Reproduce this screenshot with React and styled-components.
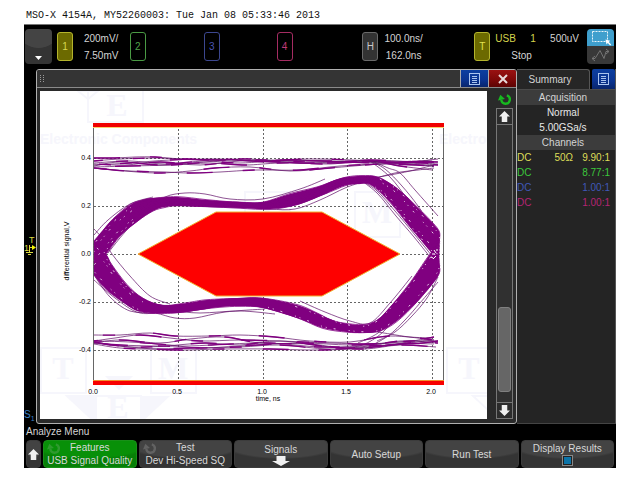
import React from 'react';
import styled, { createGlobalStyle } from 'styled-components';

const GlobalStyle = createGlobalStyle`
	* {
		box-sizing: border-box;
	}
	body {
		margin: 0;
		background: #fff;
		font-family: 'Liberation Sans', Arial, sans-serif;
		font-size: 10px;
		line-height: 12px;
	}
	button {
		font: inherit;
		color: inherit;
		padding: 0;
		margin: 0;
		border: 0;
		cursor: pointer;
	}
`;

const channels = [
	{ id: 1, color: '#d8d850', border: '#b4b42c', fill: '#6c6a00', scale: '200mV/', offset: '7.50mV' },
	{ id: 2, color: '#4fa24a', border: '#4a9a44' },
	{ id: 3, color: '#4a55b4', border: '#3c478f' },
	{ id: 4, color: '#c23a78', border: '#a52c62' },
];

const probes = [
	{ coupling: 'DC', impedance: '50Ω', ratio: '9.90:1', color: '#dede58' },
	{ coupling: 'DC', impedance: '', ratio: '8.77:1', color: '#3cc83c' },
	{ coupling: 'DC', impedance: '', ratio: '1.00:1', color: '#4058b8' },
	{ coupling: 'DC', impedance: '', ratio: '1.00:1', color: '#b42474' },
];

/* ---------- eye diagram data ---------- */

// outer and inner edges of the two dense bundles
const upperTop = [[94, 241], [103, 230], [113, 219], [130, 205], [142, 200], [153, 198], [177, 197], [207, 200], [240, 202], [263, 202], [290, 194], [317, 187], [335, 180], [347, 177], [362, 176], [378, 177], [397, 188], [417, 207], [437, 228], [440, 236]];
const upperBottom = [[94, 268], [106, 254], [120, 236], [137, 222], [153, 211], [165, 207], [177, 206], [207, 207], [240, 208], [270, 209], [297, 205], [323, 195], [336, 189], [347, 185], [358, 184], [371, 185], [390, 202], [410, 227], [430, 251], [439, 262]];
const lowerTop = [[94, 241], [106, 254], [112, 265], [127, 285], [143, 298], [163, 305], [187, 303], [207, 300], [240, 298], [263, 298], [297, 305], [317, 313], [330, 319], [343, 323], [363, 325], [377, 320], [390, 307], [410, 283], [428, 257], [438, 244]];
const lowerBottom = [[94, 275], [103, 286], [113, 295], [133, 309], [143, 312], [153, 313], [177, 313], [200, 310], [220, 307], [240, 306], [263, 308], [297, 318], [323, 328], [347, 332], [363, 333], [380, 331], [397, 321], [417, 302], [437, 278], [440, 268]];

const outliers = [
	[[94, 229], [102, 238], [112, 254], [130, 276], [150, 296], [170, 304]],
	[[108, 253], [125, 232], [145, 211], [165, 197], [185, 193], [205, 194], [230, 199], [263, 199], [300, 189], [325, 179]],
	[[94, 235], [108, 220], [130, 204], [153, 197]],
	[[94, 275], [110, 297], [130, 311], [155, 313], [175, 318], [195, 318], [225, 312], [265, 309]],
	[[94, 280], [115, 298], [140, 313], [170, 311], [200, 313], [240, 311], [275, 314]],
	[[240, 206], [270, 209], [295, 209], [320, 200], [345, 188], [362, 182]],
	[[368, 160], [385, 169], [402, 186], [418, 206], [432, 228]],
	[[372, 161], [388, 168], [400, 173], [415, 190], [438, 216]],
	[[370, 161], [390, 177], [408, 200], [424, 222], [436, 240]],
	[[372, 178], [390, 175], [410, 171], [434, 165]],
	[[370, 180], [395, 173], [418, 170], [434, 168]],
	[[347, 348], [365, 344], [385, 330], [405, 303], [422, 280], [438, 256]],
	[[358, 343], [378, 333], [392, 318], [408, 292], [428, 262]],
	[[377, 341], [395, 332], [412, 316], [427, 298], [438, 277]],
	[[365, 349], [388, 336], [405, 320], [420, 303], [438, 282]],
	[[300, 301], [325, 312], [350, 321], [370, 323], [390, 303], [412, 276]],
	[[372, 331], [390, 334], [410, 337], [433, 338]],
	[[360, 180], [376, 190], [395, 211], [415, 235], [432, 256]],
	[[362, 181], [378, 194], [396, 216], [414, 237], [434, 262]],
];

const highRail = [
	[[94, 158], [115, 158], [135, 157], [155, 157], [180, 159], [220, 160], [270, 160], [330, 161], [380, 161], [438, 162]],
	[[94, 161], [120, 159], [160, 158], [210, 160], [250, 159], [300, 163], [360, 161], [400, 163], [438, 159]],
	[[94, 163], [130, 161], [165, 164], [205, 161], [240, 163], [290, 160], [340, 162], [390, 162], [438, 165]],
	[[94, 164], [125, 165], [160, 162], [200, 165], [240, 161], [280, 162], [330, 164], [370, 160], [438, 164]],
	[[94, 166], [120, 162], [160, 165], [195, 163], [230, 160], [270, 162], [320, 161], [380, 163], [432, 160]],
	[[94, 167], [130, 166], [170, 165], [210, 163], [245, 165], [280, 163], [330, 163], [380, 162], [434, 166]],
	[[94, 168], [125, 171], [158, 173], [190, 171], [215, 168], [250, 167], [290, 171], [330, 168], [380, 164], [434, 162]],
	[[94, 168], [130, 171], [165, 172], [190, 173], [220, 172], [255, 170], [300, 170], [340, 166], [385, 164], [434, 166]],
	[[94, 165], [130, 163], [170, 160], [220, 159], [260, 161], [310, 159], [370, 161], [400, 166], [432, 170]],
];

const lowRail = [
	[[94, 335], [120, 335], [150, 333], [175, 336], [210, 336], [240, 335], [275, 337], [310, 341], [350, 342], [390, 336], [434, 340]],
	[[94, 341], [115, 338], [140, 335], [170, 338], [200, 341], [240, 340], [280, 341], [330, 343], [375, 344], [410, 341], [438, 341]],
	[[94, 343], [120, 340], [160, 343], [190, 339], [225, 337], [260, 343], [310, 344], [350, 348], [400, 341], [438, 343]],
	[[94, 343], [120, 345], [155, 346], [190, 346], [230, 344], [270, 343], [320, 347], [360, 346], [410, 344], [438, 341]],
	[[94, 342], [130, 347], [165, 346], [205, 343], [240, 345], [280, 341], [330, 347], [365, 349], [400, 345], [436, 347]],
	[[94, 344], [120, 348], [150, 349], [190, 348], [240, 347], [280, 345], [330, 349], [380, 346], [434, 340]],
	[[94, 343], [140, 348], [180, 350], [220, 349], [270, 349], [310, 350], [350, 349], [390, 345], [434, 337]],
	[[94, 341], [130, 342], [170, 345], [200, 348], [240, 346], [300, 343], [350, 345], [390, 343], [434, 344]],
];

const smooth = (points, start = 'M') => {
	let d = `${start}${points[0].join(' ')}`;
	for (let i = 0; i < points.length - 1; i++) {
		const p0 = points[i - 1] || points[i];
		const p1 = points[i];
		const p2 = points[i + 1];
		const p3 = points[i + 2] || p2;
		d += `C${p1[0] + (p2[0] - p0[0]) / 6} ${p1[1] + (p2[1] - p0[1]) / 6} `;
		d += `${p2[0] - (p3[0] - p1[0]) / 6} ${p2[1] - (p3[1] - p1[1]) / 6} ${p2[0]} ${p2[1]}`;
	}
	return d;
};

const band = (top, bottom) => `${smooth(top)}${smooth([...bottom].reverse(), 'L')}Z`;

// one trace between the two edges, k = 0 on top and 1 at the bottom
const between = (top, bottom, k) =>
	top.map((p, i) => [
		p[0] + (bottom[i][0] - p[0]) * k,
		p[1] + (bottom[i][1] - p[1]) * k + Math.sin(i * 1.7 + k * 31) * 0.5,
	]);

const steps = [0, 0.1, 0.2, 0.3, 0.4, 0.5, 0.6, 0.7, 0.8, 0.9, 1];
const xTicks = [[94, '0.0'], [178, '0.5'], [263, '1.0'], [347, '1.5'], [432, '2.0']];
const yTicks = [[158, '0.4'], [206, '0.2'], [254, '0.0'], [302, '-0.2'], [350, '-0.4']];

const Logo = ({ x, y, whole }) => (
	<g transform={`translate(${x} ${y})`}>
		<path d="M0 0h45v45h-45zM55 48h45v45h-45zM26 48h28v26z" fill="none" stroke="#f6f6fc" strokeWidth="2" />
		<LogoText x="22" y="31">T</LogoText>
		{whole && (
			<>
				<path d="M110 0h45v45h-45z" fill="none" stroke="#f6f6fc" strokeWidth="2" />
				<path d="M26 48h28v26zM129 48h-28v26zM64 28h28l-14 14z" fill="#f6f6fc" />
				<LogoText x="132" y="31">M</LogoText>
				<LogoText x="77" y="70">E</LogoText>
			</>
		)}
	</g>
);

const EyeDiagram = () => (
	<Chart viewBox="40 91 447 328" role="img" aria-label="Eye diagram">
		<rect x="40" y="91" width="447" height="328" fill="#fff" />
		<Logo x={41} y={348} whole />
		<Logo x={245} y={192} whole />
		<Logo x={447} y={348} />
		<path d="M88 91v31h55v-31M78 91h20l-10 8z" fill="none" stroke="#f6f6fc" strokeWidth="2" />
		<LogoText x="117" y="116">E</LogoText>
		<Watermark x="40" y="144">Electronic Components</Watermark>
		<Watermark x="439" y="144">Electro</Watermark>

		<g stroke="#666" strokeDasharray="2 2" shapeRendering="crispEdges">
			{xTicks.slice(1).map(([x]) => (
				<line key={x} x1={x + 0.5} x2={x + 0.5} y1="129" y2="380" />
			))}
			{yTicks.map(([y]) => (
				<line key={y} x1="94" x2="443" y1={y + 0.5} y2={y + 0.5} />
			))}
		</g>
		<path d="M93.5 123V385M443.5 123V385" stroke="#666" shapeRendering="crispEdges" />

		<path d="M138 254L216 212H322L400 254L322 296H216Z" fill="#fe0000" stroke="#f0b030" />

		<g fill="none" stroke="#5e0c66" strokeWidth="0.7">
			{[...highRail, ...lowRail].map((line, i) => (
				<path key={i} d={smooth(line)} />
			))}
			{outliers.map((line, i) => (
				<path key={i} d={smooth(line)} />
			))}
		</g>
		<g fill="none" stroke="#800080" strokeWidth="1.4" strokeDasharray="26 30 12 38">
			{[...highRail, ...lowRail].map((line, i) => (
				<path key={i} d={smooth(line)} strokeDashoffset={i * 17} />
			))}
		</g>

		<g fill="#800080">
			<path d={band(upperTop, upperBottom)} />
			<path d={band(lowerTop, lowerBottom)} />
		</g>
		<g fill="none" stroke="#800080" strokeWidth="0.8">
			{steps.map(k => (
				<path key={k} d={smooth(between(upperTop, upperBottom, k))} />
			))}
			{steps.map(k => (
				<path key={k} d={smooth(between(lowerTop, lowerBottom, k))} />
			))}
		</g>
		<g fill="none" stroke="#f0dcf0" strokeWidth="0.9" strokeDasharray="1 7 2 13 1 4">
			{[0.12, 0.3, 0.72, 0.88].map(k => (
				<path key={k} d={smooth(between(upperTop, upperBottom, k).slice(0, 4))} strokeDashoffset={k * 40} />
			))}
			{[0.1, 0.3, 0.8, 0.92].map(k => (
				<path key={k} d={smooth(between(upperTop, upperBottom, k).slice(15))} strokeDashoffset={k * 50} />
			))}
			{[0.12, 0.3, 0.88].map(k => (
				<path key={k} d={smooth(between(lowerTop, lowerBottom, k).slice(0, 5))} strokeDashoffset={k * 30} />
			))}
			{[0.1, 0.85].map(k => (
				<path key={k} d={smooth(between(lowerTop, lowerBottom, k).slice(10))} strokeDashoffset={k * 60} />
			))}
		</g>
		<path d="M434 250l2 3M432 254h3M436 256l-3 3M437 249v2M431 257l2 1" stroke="#fff" />

		<g shapeRendering="crispEdges">
			<rect x="93" y="123" width="351" height="4" fill="#f00000" />
			<rect x="93" y="127" width="351" height="1" fill="#f8d070" />
			<rect x="93" y="381" width="351" height="4" fill="#f80000" />
			<rect x="93" y="380" width="351" height="1" fill="#f09030" />
		</g>

		{xTicks.map(([x, label]) => (
			<Tick key={x} x={x - 1} y="394" textAnchor="middle">{label}</Tick>
		))}
		{yTicks.map(([y, label]) => (
			<Tick key={y} x="91" y={y + 2} textAnchor="end">{label}</Tick>
		))}
		<Tick x="268" y="401" textAnchor="middle">time, ns</Tick>
		<Tick transform="translate(69 251) rotate(-90)" textAnchor="middle">differential signal,V</Tick>
	</Chart>
);

/* ---------- icons ---------- */

const ListIcon = () => (
	<svg width="11" height="12" viewBox="0 0 11 12" fill="none" stroke="#a9c4ee" shapeRendering="crispEdges">
		<path d="M.5 .5h10v11h-10zM3 3.5h5M3 5.5h5M3 7.5h5M3 9.5h5" />
	</svg>
);

const CloseIcon = () => (
	<svg width="10" height="10" viewBox="0 0 10 10" stroke="#e8dada" strokeWidth="2">
		<path d="M1 1l8 8M9 1l-8 8" />
	</svg>
);

const KnobIcon = ({ color, size = 13 }) => (
	<svg width={size} height={size} viewBox="0 0 14 14" fill="none" stroke={color} strokeWidth="2.6">
		<path d="M9.500 2.600A4.600 4.600 0 1 1 3.600 7.500" />
		<path d="M0 8L2.500 2L7.500 6.500Z" fill={color} stroke="none" />
	</svg>
);

const ArrowIcon = ({ down, wide }) => (
	<svg width={wide ? 18 : 11} height={wide ? 10 : 11} viewBox="0 0 12 12" preserveAspectRatio="none" fill="#f0f0f0">
		<path d={down ? 'M3 0h6v6h3L6 12L0 6h3z' : 'M3 12h6V6h3L6 0L0 6h3z'} />
	</svg>
);

const GripIcon = () => (
	<svg width="4" height="7" viewBox="0 0 4 7" fill="#999" shapeRendering="crispEdges">
		<path d="M0 0h1v1H0zM3 0h1v1H3zM0 2h1v1H0zM3 2h1v1H3zM0 4h1v1H0zM3 4h1v1H3zM0 6h1v1H0zM3 6h1v1H3z" />
	</svg>
);

const TouchModeIcon = () => (
	<svg width="27" height="35" viewBox="0 0 27 35" fill="none">
		<path d="M0 17V4a4 4 0 0 1 4-4h19a4 4 0 0 1 4 4v13z" fill="#3f9fcd" />
		<path d="M0 17h27v14a4 4 0 0 1-4 4H4a4 4 0 0 1-4-4z" fill="#383838" />
		<rect x="5.5" y="2.5" width="15" height="10" stroke="#e8f4fa" strokeDasharray="2 1" />
		<path d="M18.500 10.500l1 5 1.300-1.400 2.400 2.400 1-1-2.400-2.400 1.400-1.300z" fill="#fff" />
		<path d="M5 29.500H8L13 21.500L17 29.500L19 22.500H22M8 27l-3 2.500l3 2.500M19 20l3 2.500l-3 2.500" stroke="#747474" />
	</svg>
);

const TriggerMarker = () => (
	<svg width="12" height="24" viewBox="0 0 12 24" fill="none" stroke="#dcdc40">
		<MarkerText x="5" y="8">T</MarkerText>
		<MarkerText x="0" y="16">1</MarkerText>
		<path d="M5.500 10v8M5.500 12.500h3M2 17.500h7M4 19.500h3" />
		<path d="M8 10l4 2.500-4 2.500z" fill="#f4f400" stroke="none" />
	</svg>
);

/* ---------- page ---------- */

const App = () => (
	<Page>
		<GlobalStyle />
		<Caption>MSO-X 4154A, MY52260003: Tue Jan 08 05:33:46 2013</Caption>
		<Scope>
			<StatusBar>
				<MenuKey aria-label="Main menu">
					<svg width="7" height="4" viewBox="0 0 7 4" fill="#fff">
						<path d="M0 0h7l-3.500 4z" />
					</svg>
				</MenuKey>
				{channels.map(channel => (
					<Slot key={channel.id}>
						<Badge $color={channel.color} $border={channel.border} $fill={channel.fill}>{channel.id}</Badge>
						{channel.scale && (
							<Readout>
								<span>{channel.scale}</span>
								<span>{channel.offset}</span>
							</Readout>
						)}
					</Slot>
				))}
				<Slot>
					<Badge $color="#c8c8c8" $border="#6a6a6a" $fill="#333">H</Badge>
					<Readout $near>
						<span>100.0ns/</span>
						<span>162.0ns</span>
					</Readout>
				</Slot>
				<Slot>
					<Badge $color="#e4e450" $border="#b4b42c" $fill="#6c6a00">T</Badge>
					<TriggerReadout>
						<TriggerRow>
							<TriggerSource>USB</TriggerSource>
							<TriggerSource>1</TriggerSource>
							<span>500uV</span>
						</TriggerRow>
						<RunState>Stop</RunState>
					</TriggerReadout>
				</Slot>
				<TouchKey aria-label="Touch mode">
					<TouchModeIcon />
				</TouchKey>
			</StatusBar>

			<Main>
				<MarkerStrip>
					<TriggerMarker />
					<SerialMarker>S<sub>1</sub></SerialMarker>
				</MarkerStrip>

				<ResultWindow>
					<WindowBar>
						<Grip><GripIcon /></Grip>
						<BlueButton aria-label="Window menu"><ListIcon /></BlueButton>
						<CloseButton aria-label="Close"><CloseIcon /></CloseButton>
					</WindowBar>
					<WindowBody>
						<EyeDiagram />
						<ScrollColumn>
							<KnobIcon color="#17b820" />
							<ScrollBar>
								<ScrollButton aria-label="Scroll up"><ArrowIcon /></ScrollButton>
								<Track>
									<Thumb />
								</Track>
								<ScrollButton $bottom aria-label="Scroll down"><ArrowIcon down /></ScrollButton>
							</ScrollBar>
						</ScrollColumn>
					</WindowBody>
				</ResultWindow>

				<Sidebar>
					<SidebarHead>
						<SummaryTab>Summary</SummaryTab>
						<SidebarMenu aria-label="Sidebar menu"><ListIcon /></SidebarMenu>
					</SidebarHead>
					<SectionTitle>Acquisition</SectionTitle>
					<Value>Normal</Value>
					<Value>5.00GSa/s</Value>
					<SectionTitle>Channels</SectionTitle>
					<ProbeTable>
						<tbody>
							{probes.map((probe, i) => (
								<ProbeRow key={i} $color={probe.color}>
									<td>{probe.coupling}</td>
									<td>{probe.impedance}</td>
									<td>{probe.ratio}</td>
								</ProbeRow>
							))}
						</tbody>
					</ProbeTable>
				</Sidebar>
			</Main>

			<MenuTitle>Analyze Menu</MenuTitle>
			<Softkeys>
				<Softkey aria-label="Back"><ArrowIcon /></Softkey>
				<Softkey $active>
					<KnobMark><KnobIcon color="#2f9a2f" /></KnobMark>
					<span>Features</span>
					<span>USB Signal Quality</span>
				</Softkey>
				<Softkey>
					<KnobMark><KnobIcon color="#626262" /></KnobMark>
					<span>Test</span>
					<span>Dev Hi-Speed SQ</span>
				</Softkey>
				<Softkey>
					<span>Signals</span>
					<ArrowIcon down wide />
				</Softkey>
				<Softkey>Auto Setup</Softkey>
				<Softkey>Run Test</Softkey>
				<Softkey as="label">
					<span>Display Results</span>
					<Check type="checkbox" defaultChecked />
				</Softkey>
			</Softkeys>
		</Scope>
	</Page>
);

export default App;

const Page = styled.div`
	padding: 8px 24px 12px;
`;

const Caption = styled.div`
	padding-left: 2px;
	font-family: 'Liberation Mono', monospace;
	line-height: 16px;
	color: #111;
	white-space: nowrap;
`;

const Scope = styled.div`
	background: #000;
	color: #d4d4d4;
`;

const StatusBar = styled.header`
	display: grid;
	grid-template-columns: 32fr 73fr 74fr 73fr 86fr 112fr 113fr 29fr;
	padding: 4px 0 5px 1px;
	border-top: 1px solid #777;
`;

const MenuKey = styled.button`
	width: 27px;
	height: 35px;
	display: flex;
	align-items: flex-end;
	justify-content: center;
	padding-bottom: 4px;
	border-radius: 4px;
	background: radial-gradient(ellipse 80% 55% at top, #444 0 96%, #343434 100%);
`;

const Slot = styled.div`
	display: flex;
	min-width: 0;
	padding-top: 3px;
`;

const Badge = styled.button`
	flex: none;
	width: 16px;
	height: 29px;
	border: 1px solid ${props => props.$border};
	border-radius: 3px;
	background: ${props => props.$fill || '#000'};
	color: ${props => props.$color};
`;

const Readout = styled.div`
	display: flex;
	flex-direction: column;
	align-items: center;
	padding-left: ${props => (props.$near ? '6px' : '11px')};
	line-height: 17px;
	margin-top: -2px;
`;

const TriggerReadout = styled.div`
	flex: 1;
	padding: 0 8px 0 5px;
	line-height: 17px;
	margin-top: -2px;
`;

const TriggerRow = styled.div`
	display: flex;
	justify-content: space-between;
`;

const TriggerSource = styled.span`
	color: #d4d44c;
`;

const RunState = styled.div`
	padding-left: 16px;
`;

const TouchKey = styled.button`
	display: flex;
	background: none;
`;

const Main = styled.main`
	display: flex;
`;

const MarkerStrip = styled.div`
	flex: none;
	width: 12px;
	padding: 166px 0 2px;
	display: flex;
	flex-direction: column;
	justify-content: space-between;
`;

const MarkerText = styled.text`
	font-size: 9px;
	fill: #dcdc40;
	stroke: none;
`;

const SerialMarker = styled.div`
	color: #3c82c8;

	sub {
		font-size: 7px;
		line-height: 7px;
	}
`;

const ResultWindow = styled.section`
	flex: 1;
	min-width: 0;
	border: 1px solid #b0b0b0;
	border-radius: 3px;
	background: #2a2a2a;
	overflow: hidden;
`;

const WindowBar = styled.div`
	display: flex;
	height: 18px;
	border-bottom: 1px solid #8a8a8a;
	background: #343434;
`;

const Grip = styled.span`
	flex: 1;
	display: flex;
	align-items: center;
	padding-left: 3px;
`;

const BlueButton = styled.button`
	display: flex;
	align-items: center;
	justify-content: center;
	width: 28px;
	border-left: 1px solid #aaa;
	background: linear-gradient(#0c3fa0, #0a3390 60%, #08256c);
`;

const CloseButton = styled(BlueButton)`
	background: linear-gradient(#9a1212, #7c0808 60%, #5c0404);
`;

const WindowBody = styled.div`
	display: flex;
	padding: 3px 0 4px 3px;
`;

const Chart = styled.svg`
	display: block;
	flex: 1;
	min-width: 0;
	height: auto;
	background: #fff;
`;

const Tick = styled.text`
	font-size: 7px;
	fill: #000;
`;

const LogoText = styled.text`
	font-family: 'Liberation Serif', serif;
	font-size: 32px;
	font-weight: bold;
	text-anchor: middle;
	fill: #f6f6fc;
`;

const Watermark = styled.text`
	font-size: 14px;
	font-weight: bold;
	fill: #f6f6fc;
`;

const ScrollColumn = styled.div`
	flex: none;
	width: 29px;
	display: flex;
	flex-direction: column;
	align-items: center;
	gap: 2px;
	padding: 2px 3px 0 9px;
`;

const ScrollBar = styled.div`
	flex: 1;
	width: 17px;
	display: flex;
	flex-direction: column;
	border: 1px solid #777;
	background: #303030;
`;

const ScrollButton = styled.button`
	flex: none;
	height: 16px;
	display: flex;
	align-items: center;
	justify-content: center;
	background: #2c2c2c;
	border-${props => (props.$bottom ? 'top' : 'bottom')}: 1px solid #777;
`;

const Track = styled.div`
	flex: 1;
	display: flex;
	flex-direction: column;
	justify-content: flex-end;
	padding: 0 1px 10px;
`;

const Thumb = styled.div`
	height: 32%;
	border: 1px solid #808080;
	border-radius: 3px;
	background: #666;
`;

const Sidebar = styled.aside`
	flex: none;
	width: 99px;
	border-right: 1px solid #555;
	border-bottom: 1px solid #444;
	background: #242424;
`;

const SidebarHead = styled.div`
	display: flex;
	justify-content: space-between;
	height: 21px;
	background: #000;
	border-bottom: 1px solid #4a4a4a;
`;

const SummaryTab = styled.button`
	width: 73px;
	padding-right: 6px;
	border-top: 1px solid #555;
	border-right: 1px solid #555;
	border-radius: 0 3px 0 0;
	background: #262626;
`;

const SidebarMenu = styled(BlueButton)`
	width: 23px;
	border-left: 0;
	border-radius: 2px 2px 0 0;
`;

const SectionTitle = styled.h2`
	margin: 0;
	padding-right: 6px;
	font-size: 10px;
	font-weight: normal;
	line-height: 15px;
	text-align: center;
	background: #3c3c3c;
`;

const Value = styled.div`
	padding-right: 6px;
	line-height: 15px;
	text-align: center;
	color: #e8e8e8;
`;

const ProbeTable = styled.table`
	width: 100%;
	border-collapse: collapse;
`;

const ProbeRow = styled.tr`
	color: ${props => props.$color};

	td {
		padding: 0;
		line-height: 15px;
	}
	td + td {
		text-align: right;
	}
	td:last-child {
		width: 42px;
		padding-right: 5px;
	}
`;

const MenuTitle = styled.div`
	padding-left: 2px;
	line-height: 16px;
`;

const Softkeys = styled.nav`
	display: grid;
	grid-template-columns: 15px repeat(6, 1fr);
	gap: 2px;
	padding: 0 2px;
`;

const Softkey = styled.button`
	position: relative;
	height: 28px;
	display: flex;
	flex-direction: column;
	align-items: center;
	justify-content: center;
	line-height: 13px;
	white-space: nowrap;
	border-radius: 4px;
	border: 1px solid ${props => (props.$active ? '#189018' : '#3c3c3c')};
	background: ${props =>
		props.$active
			? 'radial-gradient(ellipse 70% 70% at top, #089008 0 90%, #078007 100%)'
			: 'radial-gradient(ellipse 70% 70% at top, #434343 0 90%, #343434 100%)'};
	color: #d8d8d8;
`;

const KnobMark = styled.i`
	position: absolute;
	top: 1px;
	left: 3px;
`;

const Check = styled.input`
	appearance: none;
	width: 11px;
	height: 11px;
	margin: 0;
	border: 1px solid #888;
	background: #222;

	&:checked {
		background: #0c74a8;
		box-shadow: inset 0 0 0 1px #222;
	}
`;
